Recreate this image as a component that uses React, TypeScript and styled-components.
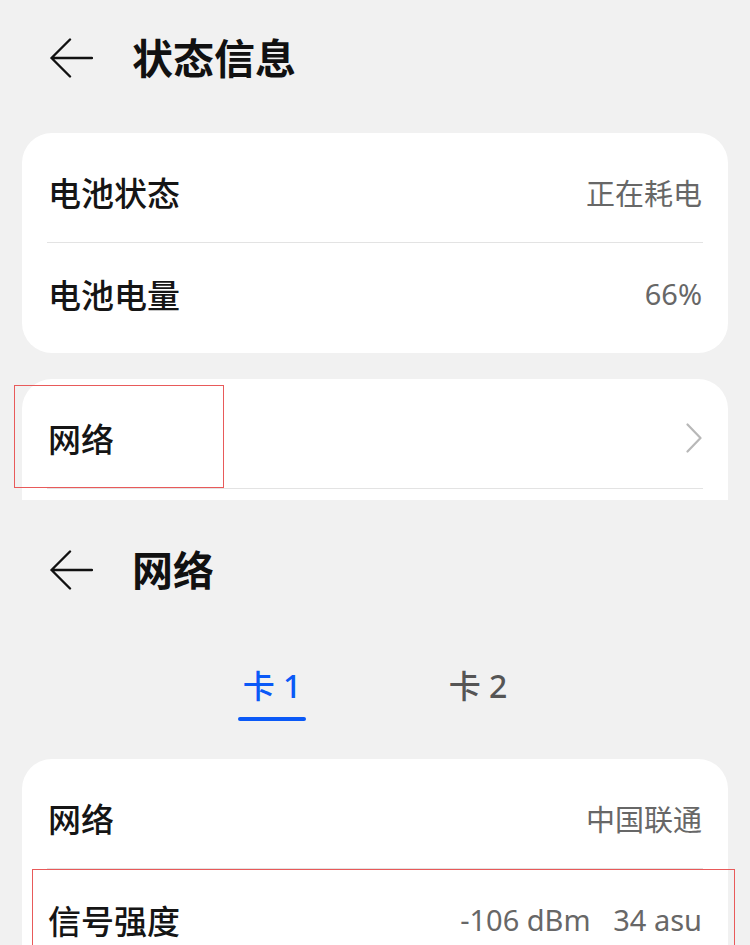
import styled, { createGlobalStyle } from "styled-components";

const GlobalStyle = createGlobalStyle`
  html, body {
    margin: 0;
    padding: 0;
    background: #f1f1f1;
    overflow: hidden;
  }
  body {
    font-family: "Noto Sans", "Noto Sans CJK SC", sans-serif;
    -webkit-font-smoothing: antialiased;
  }
`;

const Page = styled.div`
  width: 750px;
  height: 945px;
  overflow: hidden;
  display: flex;
  flex-direction: column;
`;

const Screen = styled.div<{ h: number }>`
  position: relative;
  height: ${({ h }) => h}px;
  flex-shrink: 0;
  overflow: hidden;
  display: flex;
  flex-direction: column;
`;

const Header = styled.div<{ h: number }>`
  height: ${({ h }) => h}px;
  display: flex;
  align-items: center;
  padding-left: 49px;
  gap: 39px;
  flex-shrink: 0;
`;

const Title = styled.div`
  font-family: "Noto Sans CJK SC", sans-serif;
  font-weight: 700;
  font-size: 41px;
  color: #111;
  line-height: 1;
  margin-top: -3px;
`;

const Card = styled.div<{ mt: number }>`
  margin: ${({ mt }) => mt}px 22px 0;
  background: #fff;
  border-radius: 30px;
  padding: 8px 25px;
  display: flex;
  flex-direction: column;
  flex-shrink: 0;
`;

const Row = styled.div<{ line?: boolean }>`
  height: 101px;
  display: flex;
  align-items: center;
  justify-content: space-between;
  border-bottom: 1px solid ${({ line }) => (line ? "#e3e3e3" : "transparent")};
  padding: 0 1px;
`;

const Label = styled.div`
  font-family: "Noto Sans CJK SC", sans-serif;
  font-weight: 500;
  font-size: 33px;
  color: #151515;
`;

const Value = styled.div`
  font-family: "Noto Sans", "Noto Sans CJK SC", sans-serif;
  font-size: 29px;
  color: #676767;
  white-space: pre;
`;

const Tabs = styled.div`
  display: flex;
  justify-content: center;
  gap: 76px;
  padding-top: 26px;
  flex-shrink: 0;
`;

const Tab = styled.div<{ active?: boolean }>`
  width: 130px;
  display: flex;
  flex-direction: column;
  align-items: center;
  gap: 11px;
  color: ${({ active }) => (active ? "#0a59f7" : "#555")};
  font-family: "Noto Sans", "Noto Sans CJK SC", sans-serif;
  font-weight: 500;
  font-size: 32px;
  line-height: 40px;
`;

const Underline = styled.div<{ show?: boolean }>`
  width: 68px;
  height: 4px;
  border-radius: 2px;
  background: ${({ show }) => (show ? "#0a59f7" : "transparent")};
`;

const Mark = styled.div<{ x: number; y: number; w: number; h: number }>`
  position: absolute;
  left: ${({ x }) => x}px;
  top: ${({ y }) => y}px;
  width: ${({ w }) => w}px;
  height: ${({ h }) => h}px;
  border: 1px solid #e85a5a;
  box-sizing: border-box;
  pointer-events: none;
`;

const Back = () => (
  <svg width="44" height="40" viewBox="0 0 44 40" fill="none">
    <path
      d="M21 1.5 L2.5 20 L21 38.5 M2.5 20 H43"
      stroke="#111"
      strokeWidth="2.4"
      strokeLinecap="round"
      strokeLinejoin="round"
    />
  </svg>
);

const Chevron = () => (
  <svg width="16" height="30" viewBox="0 0 16 30" fill="none">
    <path
      d="M1.5 1.5 L14.5 15 L1.5 28.5"
      stroke="#b8b8b8"
      strokeWidth="2.2"
      strokeLinecap="round"
      strokeLinejoin="round"
    />
  </svg>
);

export default function App() {
  return (
    <>
      <GlobalStyle />
      <Page>
        <Screen h={500}>
          <Header h={116}>
            <Back />
            <Title>状态信息</Title>
          </Header>
          <Card mt={17}>
            <Row line>
              <Label>电池状态</Label>
              <Value>正在耗电</Value>
            </Row>
            <Row>
              <Label>电池电量</Label>
              <Value>66%</Value>
            </Row>
          </Card>
          <Card mt={26}>
            <Row line>
              <Label>网络</Label>
              <Chevron />
            </Row>
            <Row />
          </Card>
          <Mark x={14} y={385} w={210} h={103} />
        </Screen>

        <Screen h={445}>
          <Header h={140}>
            <Back />
            <Title>网络</Title>
          </Header>
          <Tabs>
            <Tab active>
              卡 1
              <Underline show />
            </Tab>
            <Tab>
              卡 2
              <Underline />
            </Tab>
          </Tabs>
          <Card mt={38}>
            <Row line>
              <Label>网络</Label>
              <Value>中国联通</Value>
            </Row>
            <Row>
              <Label>信号强度</Label>
              <Value>-106 dBm   34 asu</Value>
            </Row>
          </Card>
          <Mark x={32} y={369} w={703} h={120} />
        </Screen>
      </Page>
    </>
  );
}
